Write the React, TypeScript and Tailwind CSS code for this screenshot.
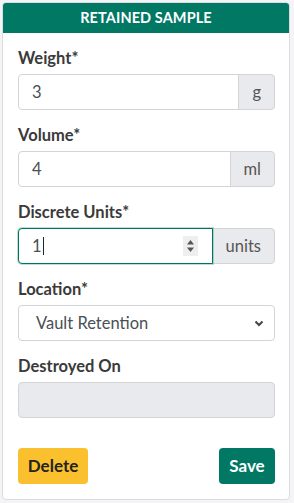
import React from "react";

const font = { fontFamily: "Lato, 'Noto Sans', sans-serif" };

function Label({ children }: { children: React.ReactNode }) {
  return (
    <div className="text-[16.5px] font-bold leading-[24px] text-[#3a3a3a] mb-[4px]">{children}</div>
  );
}

function AddonInput({ value, unit, focused }: { value: string; unit: string; focused?: boolean }) {
  return (
    <div className="flex h-[36px]">
      <div
        className={
          focused
            ? "relative flex-1 flex items-center rounded-l-[4px] border border-[#00745f] shadow-[0_0_0_1px_rgba(0,116,95,0.25)] bg-white pl-[13px] text-[16.5px] text-[#4a4f55]"
            : "flex-1 flex items-center rounded-l-[4px] border border-[#d4d4d8] bg-white pl-[13px] text-[16.5px] text-[#4a4f55]"
        }
      >
        <span>{value}</span>
        {focused && <span className="ml-[1px] inline-block w-[1px] h-[18px] bg-[#222]" />}
        {focused && (
          <div className="absolute right-[14px] top-[7px] w-[15px] h-[20px] bg-[#eeeeee] flex items-center justify-center">
            <svg width="9" height="14" viewBox="0 0 9 14">
              <path d="M4.5 1 L8 5.5 L1 5.5 Z" fill="#555" />
              <path d="M4.5 13 L8 8.5 L1 8.5 Z" fill="#555" />
            </svg>
          </div>
        )}
      </div>
      <div className="flex items-center px-[13px] -ml-[1px] border border-[#d4d4d8] bg-[#e9eaee] rounded-r-[4px] text-[16.5px] text-[#555]">
        {unit}
      </div>
    </div>
  );
}

export default function App() {
  return (
    <div className="min-h-screen bg-[#f4f4f6] pt-[2px] px-[2px]" style={font}>
      <div className="w-[288px] h-[498px] bg-white border border-[#dcdce0] rounded-[4px] overflow-hidden flex flex-col">
        <div className="h-[30px] bg-[#007864] flex items-center justify-center text-white text-[14.5px] font-bold tracking-[0.1px]">
          RETAINED SAMPLE
        </div>
        <div className="flex-1 pt-[13px] pl-[15px] pr-[14px] flex flex-col">
          <Label>Weight*</Label>
          <AddonInput value="3" unit="g" />
          <div className="mt-[13px]">
            <Label>Volume*</Label>
            <AddonInput value="4" unit="ml" />
          </div>
          <div className="mt-[13px]">
            <Label>Discrete Units*</Label>
            <AddonInput value="1" unit="units" focused />
          </div>
          <div className="mt-[13px]">
            <Label>Location*</Label>
            <div className="h-[36px] flex items-center justify-between border border-[#d4d4d8] rounded-[4px] bg-white pl-[17px] pr-[10px] text-[16.5px] text-[#4a4f55]">
              <span>Vault Retention</span>
              <svg width="10" height="7" viewBox="0 0 10 7">
                <path d="M1.5 1.5 L5 5 L8.5 1.5" stroke="#444" strokeWidth="2" fill="none" />
              </svg>
            </div>
          </div>
          <div className="mt-[13px]">
            <Label>Destroyed On</Label>
            <div className="h-[36px] border border-[#d4d4d8] rounded-[4px] bg-[#e9eaee]" />
          </div>
          <div className="mt-[30px] flex justify-between">
            <button className="h-[36px] w-[70px] rounded-[4px] bg-[#fbc02d] text-[17px] font-bold text-[#222]">
              Delete
            </button>
            <button className="h-[36px] w-[56px] rounded-[4px] bg-[#007864] text-[17px] font-bold text-white">
              Save
            </button>
          </div>
        </div>
      </div>
    </div>
  );
}
